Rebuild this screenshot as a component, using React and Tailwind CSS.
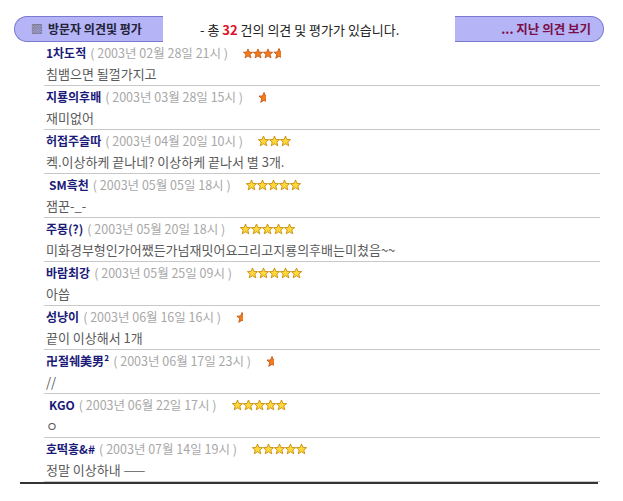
import React from "react";

const entries = [
  { name: "1차도적", date: "2003년 02월 28일 21시", star: "orange", n: 3.5, text: "침뱀으면 될껄가지고" },
  { name: "지룡의후배", date: "2003년 03월 28일 15시", star: "orange", n: 0.5, text: "재미없어" },
  { name: "허접주슬따", date: "2003년 04월 20일 10시", star: "yellow", n: 3, text: "켁.이상하케 끝나네? 이상하케 끝나서 별 3개." },
  { name: "SM흑천", date: "2003년 05월 05일 18시", star: "yellow", n: 5, text: "잼꾼-_-", indent: true },
  { name: "주몽(?)", date: "2003년 05월 20일 18시", star: "yellow", n: 5, text: "미화경부형인가어쨌든가넘재밋어요그리고지룡의후배는미쳤음~~" },
  { name: "바람최강", date: "2003년 05월 25일 09시", star: "yellow", n: 5, text: "아씁" },
  { name: "성냥이", date: "2003년 06월 16일 16시", star: "orange", n: 0.5, text: "끝이 이상해서 1개" },
  { name: "卍절쉐美男²", date: "2003년 06월 17일 23시", star: "orange", n: 0.5, text: "//" },
  { name: "KGO", date: "2003년 06월 22일 17시", star: "yellow", n: 5, text: "ㅇ", indent: true },
  { name: "호떡홍&#", date: "2003년 07월 14일 19시", star: "yellow", n: 5, text: "정말 이상하내 ——" },
];

// 12x12 five point star
const STAR = "M6 0.5 L7.6 4.3 L11.6 4.5 L8.5 7.1 L9.6 11.3 L6 9 L2.4 11.3 L3.5 7.1 L0.4 4.5 L4.4 4.3 Z";

function Star({ kind, half }) {
  const yellow = kind === "yellow";
  const fill = yellow ? "#ffd83a" : "#f47c1c";
  const stroke = yellow ? "#c48600" : "#c05010";
  return (
    <svg width={half ? 7.5 : yellow ? 11 : 10} height={yellow ? 12 : 11} viewBox={`0 0 ${half ? 7 : 12} 12`} className="block">
      <path d={STAR} fill={fill} stroke={stroke} strokeWidth="0.9" strokeLinejoin="round" />
    </svg>
  );
}

function Stars({ kind, n }) {
  const full = Math.floor(n);
  const half = n - full > 0;
  return (
    <span className="ml-[15px] flex items-center">
      {Array.from({ length: full }).map((_, i) => (
        <Star key={i} kind={kind} />
      ))}
      {half && <Star kind={kind} half />}
    </span>
  );
}

export default function App() {
  return (
    <div className="w-[623px] h-[501px] bg-white text-[13px] leading-none" style={{ fontFamily: '"Noto Sans CJK KR", "Noto Sans", sans-serif' }}>
      <div className="flex items-center pt-[16px] pl-[14px] pr-[19px]">
        <div className="flex h-[26px] w-[149px] items-center rounded-l-full border-y border-l border-[#7a7ad0] bg-[#b4b4f6] pl-[16px] text-[12px] font-bold text-[#222238]">
          <span className="mr-[5px] text-[#777788]">▩</span>방문자 의견및 평가
        </div>
        <div className="ml-[37px] flex-1 text-[#222]">
          - 총 <span className="font-bold text-[#e0102a]">32</span> 건의 의견 및 평가가 있습니다.
        </div>
        <div className="flex h-[26px] w-[149px] items-center justify-end rounded-r-full border-y border-r border-[#7a7ad0] bg-[#b4b4f6] pr-[12px] text-[12.5px] font-bold text-[#7a1048]">
          ... 지난 의견 보기
        </div>
      </div>

      <div className="ml-[20px] w-[578px] border-b-2 border-[#333]">
        <div className="ml-[24px] w-[556px]">
          {entries.map((e, i) => (
            <div key={i} className="h-[44px] border-b border-[#c8c8c8] pt-[1px]">
              <div className={`flex h-[20px] items-center ${e.indent ? "pl-[5px]" : "pl-[2px]"}`}>
                <span className="text-[12px] font-bold text-[#1a1a78]">{e.name}</span>
                <span className="ml-[4px] text-[12.5px] text-[#a8a8a8]">( {e.date} )</span>
                <Stars kind={e.star} n={e.n} />
              </div>
              <div className="flex h-[20px] items-center pl-[2px] text-[#5a5a5a]">{e.text}</div>
            </div>
          ))}
        </div>
      </div>
    </div>
  );
}
